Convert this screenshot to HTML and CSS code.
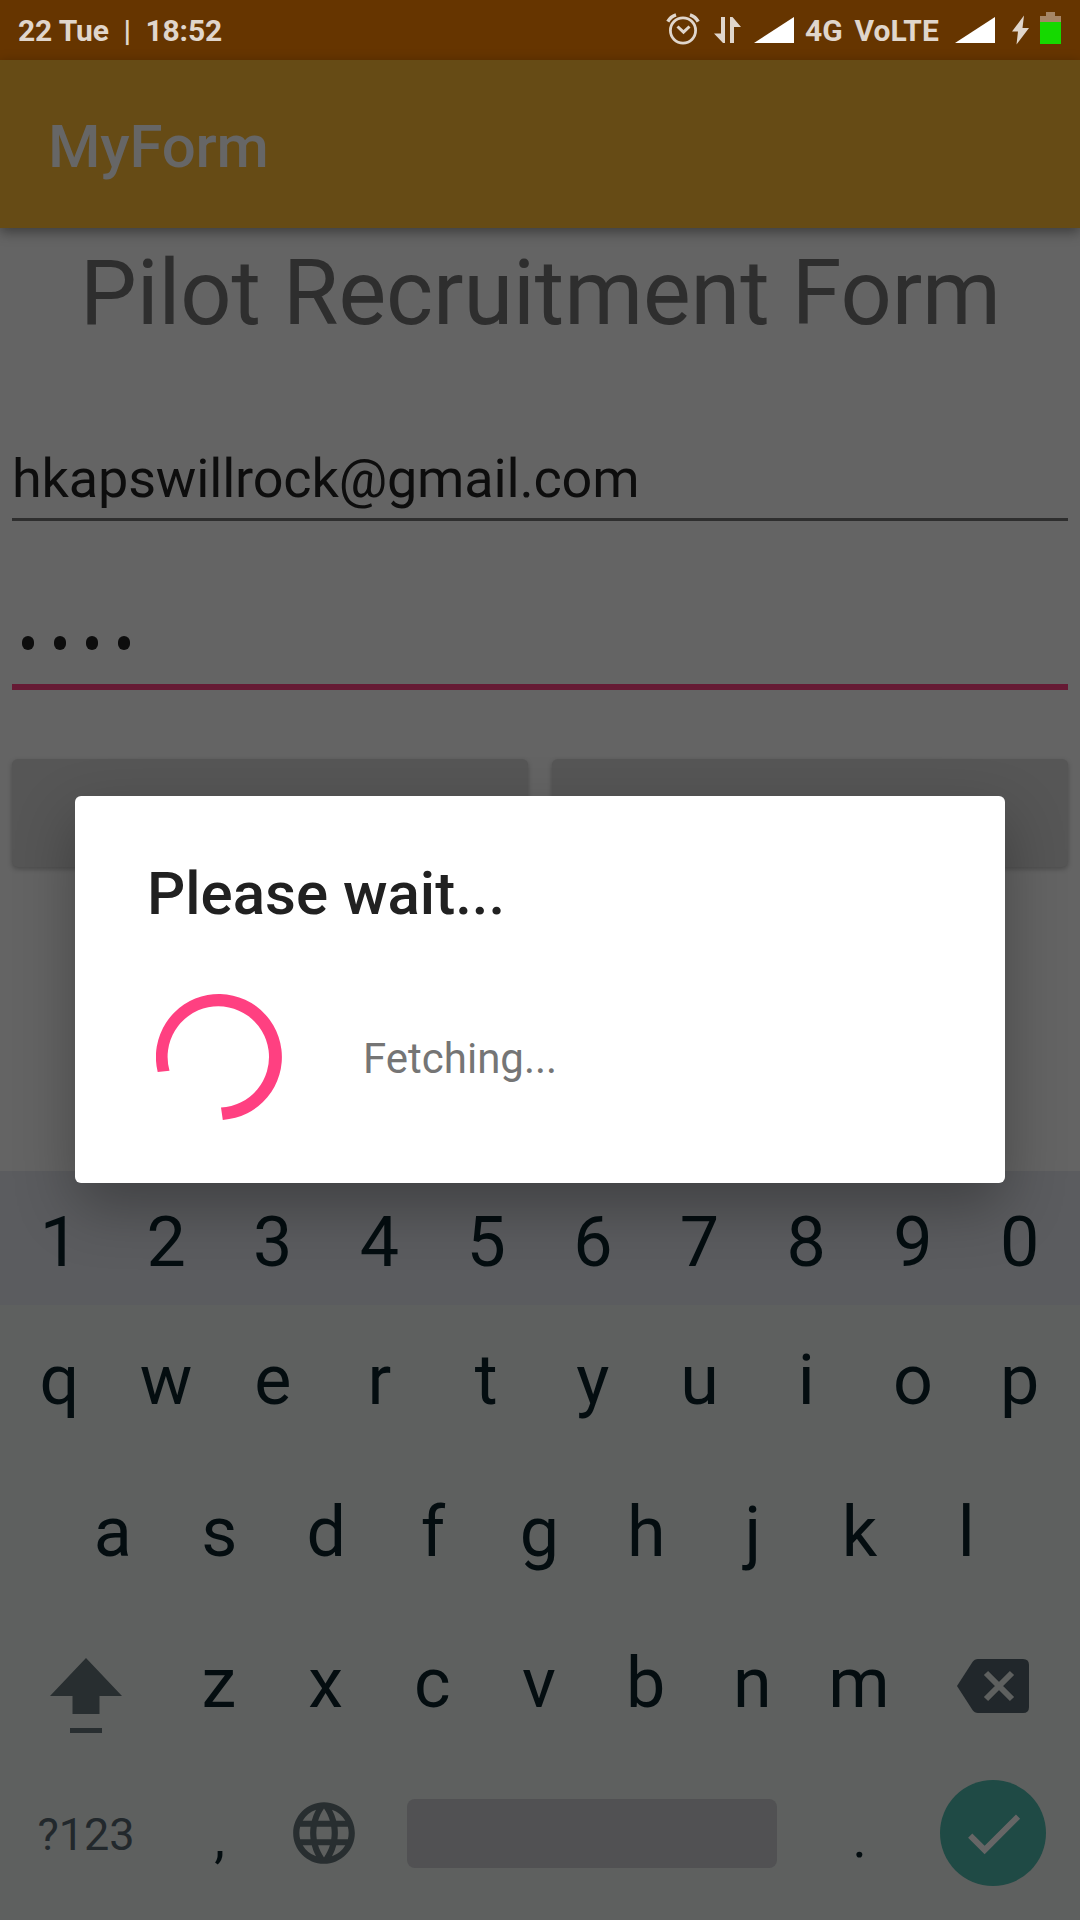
FILE: index.html
```html
<!DOCTYPE html>
<html lang="en">
<head>
<meta charset="utf-8">
<title>MyForm</title>
<link rel="stylesheet" href="styles.css">
</head>
<body>
<div class="screen">
  <header class="status">
    <span class="clock">22 Tue&nbsp; |&nbsp; 18:52</span>
    <div class="indicators">
      <svg class="alarm" width="34" height="34" viewBox="0 0 34 34" fill="none" stroke="#e0d6cc">
        <circle cx="17" cy="18.5" r="12.6" stroke-width="2.8"/>
        <path d="M11.5 14.5L17.5 20.2L23.5 14.5" stroke-width="3"/>
        <path d="M1.8 9.6Q4.5 4.5 10 2.8M32.2 9.6Q29.500 4.500 24 2.800" stroke-width="3.400"/>
      </svg>
      <svg class="data" width="28" height="26" viewBox="0 0 28 26" fill="#e0d6cc">
        <path d="M7 0h4v26h-2L0 16.500h7zM16 0h2.500L27 10h-7v16h-4z"/>
      </svg>
      <svg class="signal" width="40" height="26" viewBox="0 0 40 26" fill="#fff"><path d="M0 26L40 0V26z"/></svg>
      <span class="network">4G&nbsp; VoLTE</span>
      <svg class="signal-two" width="40" height="26" viewBox="0 0 40 26" fill="#fff"><path d="M0 26L40 0V26z"/></svg>
      <svg class="bolt" width="17" height="30" viewBox="0 0 17 30" fill="#e0d6cc"><path d="M12 0.500L0 16.500h6L4.500 29.500L17 13h-6.500z"/></svg>
      <svg class="battery" width="21" height="32" viewBox="0 0 21 32"><path d="M6 0h9v4h6v6H0V4h6z" fill="#a58565"/><path d="M0 10h21v22H0z" fill="#15d900"/></svg>
    </div>
  </header>
  <div class="toolbar"><h1 class="app-name">MyForm</h1></div>
  <main class="form">
    <h2 class="title"><span class="title-text">Pilot Recruitment Form</span></h2>
    <div class="field email">hkapswillrock@gmail.com</div>
    <div class="field password"><i class="dot"></i><i class="dot"></i><i class="dot"></i><i class="dot"></i></div>
    <div class="buttons"><div class="button"></div><div class="button"></div></div>
  </main>
  <section class="keyboard">
    <div class="row numbers"><span class="key">1</span><span class="key">2</span><span class="key">3</span><span class="key">4</span><span class="key">5</span><span class="key">6</span><span class="key">7</span><span class="key">8</span><span class="key">9</span><span class="key">0</span></div>
    <div class="row"><span class="key">q</span><span class="key">w</span><span class="key">e</span><span class="key">r</span><span class="key">t</span><span class="key">y</span><span class="key">u</span><span class="key">i</span><span class="key">o</span><span class="key">p</span></div>
    <div class="row"><span class="key">a</span><span class="key">s</span><span class="key">d</span><span class="key">f</span><span class="key">g</span><span class="key">h</span><span class="key">j</span><span class="key">k</span><span class="key">l</span></div>
    <div class="row letters-bottom">
      <svg class="shift" width="72" height="76" viewBox="0 0 72 76" fill="#282e30"><path d="M36 0L72 38H49.500V56H22.500V38H0zM20 70h32v5H20z"/></svg>
      <span class="key">z</span><span class="key">x</span><span class="key">c</span><span class="key">v</span><span class="key">b</span><span class="key">n</span><span class="key">m</span>
      <svg class="backspace" width="72" height="54" viewBox="0 0 72 54"><path d="M0 27L15.500 3Q17.500 0 21 0H66Q72 0 72 6V48Q72 54 66 54H21Q17.500 54 15.500 51z" fill="#21272b"/><path d="M29 14L55 40M55 14L29 40" stroke="#5e605f" stroke-width="6"/></svg>
    </div>
    <div class="row controls">
      <span class="key symbols">?123</span>
      <span class="key comma">,</span>
      <span class="key globe"><svg width="74" height="74" viewBox="0 0 24 24" fill="#282e30"><path d="M11.990 2C6.470 2 2 6.480 2 12s4.470 10 9.990 10C17.520 22 22 17.520 22 12S17.520 2 11.990 2zm6.930 6h-2.950a15.650 15.650 0 0 0-1.380-3.560A8.030 8.030 0 0 1 18.920 8zM12 4.040c.83 1.200 1.480 2.530 1.910 3.960h-3.820c.43-1.430 1.080-2.760 1.910-3.960zM4.260 14C4.100 13.360 4 12.690 4 12s.1-1.360.26-2h3.380c-.08.660-.14 1.320-.14 2s.06 1.340.14 2H4.260zm.82 2h2.950c.32 1.250.78 2.450 1.380 3.560A7.987 7.987 0 0 1 5.080 16zm2.950-8H5.080a7.987 7.987 0 0 1 4.330-3.560A15.650 15.650 0 0 0 8.030 8zM12 19.960c-.83-1.200-1.480-2.530-1.910-3.960h3.820c-.43 1.430-1.080 2.760-1.910 3.960zM14.340 14H9.660c-.09-.66-.16-1.320-.16-2s.07-1.350.16-2h4.680c.09.650.16 1.320.16 2s-.07 1.340-.16 2zm.25 5.560c.6-1.110 1.060-2.310 1.380-3.560h2.950a8.030 8.030 0 0 1-4.330 3.560zM16.360 14c.08-.66.14-1.320.14-2s-.06-1.340-.14-2h3.380c.16.640.26 1.310.26 2s-.1 1.360-.26 2h-3.380z"/></svg></span>
      <span class="space"></span>
      <span class="key period">.</span>
      <span class="done"><svg width="71" height="71" viewBox="0 0 24 24" fill="#666"><path d="M9 16.170L4.830 12l-1.420 1.410L9 19 21 7l-1.410-1.410z"/></svg></span>
    </div>
  </section>
  <div class="dialog">
    <h3 class="dialog-title">Please wait...</h3>
    <div class="progress">
      <svg width="126" height="126" viewBox="0 0 126 126" fill="#ff4081"><path d="M1.700 78A63 63 0 1 1 66.800 125.900L65 113.600A50.700 50.700 0 1 0 13.500 76.700z"/></svg>
      <span class="message">Fetching...</span>
    </div>
  </div>
</div>
</body>
</html>
```
FILE: styles.css
```css
* { box-sizing: border-box; }
body { margin: 0; font-family: Roboto, "Liberation Sans", sans-serif; }
h1, h2, h3 { margin: 0; }
svg { display: block; flex: none; }
.screen { position: relative; width: 1080px; height: 1920px; overflow: hidden; background: #646464; display: flex; flex-direction: column; }

.status { height: 60px; flex: none; background: #663500; color: #e0d6cc; display: flex; justify-content: space-between; padding: 0 19px 0 18px; font-size: 30px; line-height: 62px; font-weight: 700; white-space: nowrap; }
.clock { letter-spacing: -.14px; }
.indicators { display: flex; align-items: flex-start; }
.alarm { margin: 12px 14px 0 0; }
.data { margin: 17px 12px 0 0; }
.signal { margin: 17px 11px 0 0; }
.network { width: 150px; word-spacing: -1.5px; }
.signal-two { margin: 17px 17px 0 0; }
.bolt { margin: 15px 11px 0 0; }
.battery { margin-top: 12px; }

.toolbar { position: relative; height: 168px; flex: none; background: #664b15; padding: 4px 48px 0; box-shadow: 0 4px 12px rgba(0, 0, 0, .4); }
.app-name { font-size: 60px; font-weight: 500; line-height: 166px; letter-spacing: -.2px; color: #666; }

.form { height: 943px; flex: none; padding: 0 12px; }
.title { padding-left: 1px; font-size: 90px; font-weight: 400; line-height: 132px; letter-spacing: -.1px; text-align: center; color: #2e2e2e; white-space: nowrap; }
.field { display: flex; align-items: center; }
.email { margin-top: 76px; height: 85px; padding-top: 2px; font-size: 54px; letter-spacing: -.17px; color: #0d0d0d; border-bottom: 3px solid #2e2e2e; }
.password { margin-top: 73px; height: 96px; padding: 7px 0 0 10px; gap: 20px; border-bottom: 6px solid #661a34; }
.dot { width: 12px; height: 14px; border-radius: 6px; background: #0d0d0d; }
.buttons { margin-top: 69px; display: flex; gap: 24px; }
.button { flex: 1; height: 108px; border-radius: 6px; background: #565656; box-shadow: 0 2px 5px rgba(0, 0, 0, .25); }

.keyboard { flex: 1; background: #5e605f; color: #040d10; }
.row { height: 151.500px; display: flex; justify-content: center; align-items: center; padding-right: 1px; }
.numbers { height: 133.500px; padding-top: 8px; background: #5b5c5f; }
.key { width: 106.700px; flex: none; text-align: center; font-size: 70px; line-height: 82px; }
.letters-bottom { justify-content: flex-start; }
.shift { margin: 26px 43.500px 0 50px; }
.backspace { margin: 6px 0 0 44.500px; }
.controls { justify-content: flex-start; padding-bottom: 3px; }
.symbols { width: 170px; padding: 3px 0 0 2px; font-size: 45px; color: #22282c; }
.comma { width: 98px; padding: 11px 0 0 1px; font-size: 54px; }
.globe { width: 112px; display: flex; justify-content: center; }
.space { width: 370px; height: 69px; margin: 0 29px 0 27px; border-radius: 8px; background: #515153; }
.period { width: 106px; padding: 11px 0 0 1px; font-size: 54px; }
.done { width: 106px; height: 106px; margin-left: 28px; border-radius: 50%; background: #1f4a45; display: flex; align-items: center; justify-content: center; }

.dialog { position: absolute; left: 75px; top: 796px; width: 930px; height: 387px; border-radius: 6px; background: #fff; box-shadow: 0 24px 60px rgba(0, 0, 0, .3); padding: 62px 72px 0; }
.dialog-title { font-size: 60px; font-weight: 500; line-height: 72px; color: #212121; }
.progress { display: flex; align-items: center; margin-top: 64px; padding-left: 9px; }
.message { margin-left: 81px; padding-top: 3px; font-size: 42px; line-height: 50px; color: #757575; }
```
